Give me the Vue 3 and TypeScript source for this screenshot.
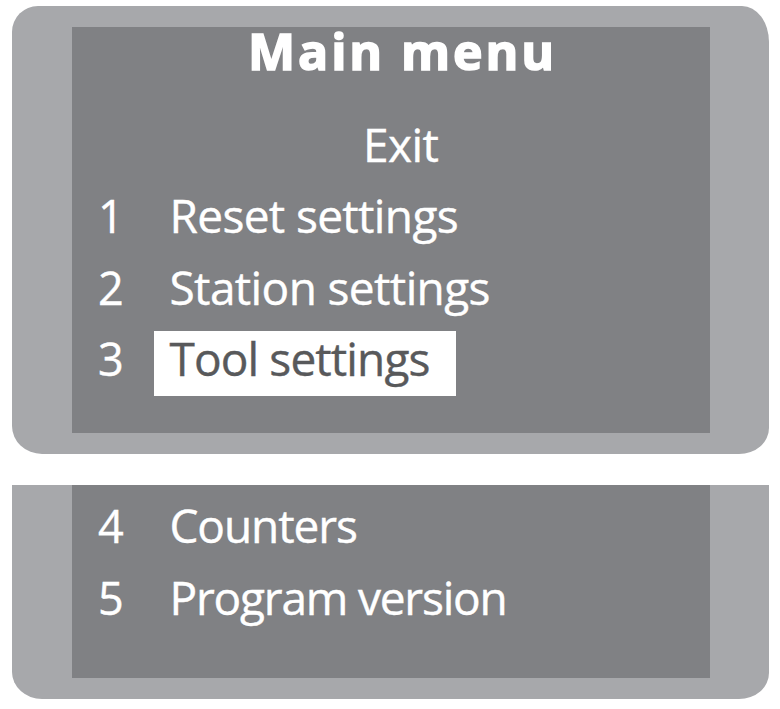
<template>
  <main class="page">
    <section class="panel panel-top">
      <div class="screen">
        <h1 class="title">Main menu</h1>
        <div class="exit">Exit</div>
        <ul class="menu">
          <li v-for="item in firstItems" :key="item.id" class="row">
            <span class="num">{{ item.id }}</span>
            <span
              class="label"
              :class="{ selected: item.id === selectedId }"
              :style="{ letterSpacing: item.tracking + 'px' }"
            >{{ item.label }}</span>
          </li>
        </ul>
      </div>
    </section>
    <section class="panel panel-bottom">
      <div class="screen">
        <ul class="menu">
          <li v-for="item in moreItems" :key="item.id" class="row">
            <span class="num">{{ item.id }}</span>
            <span class="label" :style="{ letterSpacing: item.tracking + 'px' }">{{ item.label }}</span>
          </li>
        </ul>
      </div>
    </section>
  </main>
</template>

<script setup lang="ts">
import { ref } from 'vue'

interface MenuItem {
  id: number
  label: string
  tracking: number
}

const selectedId = ref<number>(3)

const firstItems: MenuItem[] = [
  { id: 1, label: 'Reset settings', tracking: -0.65 },
  { id: 2, label: 'Station settings', tracking: -0.62 },
  { id: 3, label: 'Tool settings', tracking: -0.88 }
]

const moreItems: MenuItem[] = [
  { id: 4, label: 'Counters', tracking: -1.1 },
  { id: 5, label: 'Program version', tracking: -1.2 }
]
</script>

<style>
body {
  margin: 0;
  background: #fff;
}
</style>

<style scoped>
.page {
  box-sizing: border-box;
  height: 709px;
  padding: 6px 11px 0 12px;
  font-family: 'Open Sans', 'Noto Sans', sans-serif;
  color: #fff;
}

.panel {
  box-sizing: border-box;
  background: #a7a8ab;
  padding: 0 59px 0 60px;
}

.panel-top {
  height: 448px;
  padding-top: 21px;
  border-radius: 26px 27px 30px 30px / 26px 36px 26px 28px;
}

.panel-bottom {
  height: 214px;
  margin-top: 31px;
  border-radius: 0 0 30px 30px / 0 0 26px 27px;
}

.screen {
  box-sizing: border-box;
  display: flex;
  flex-direction: column;
  background: #808184;
}

.panel-top .screen {
  height: 406px;
}

.panel-bottom .screen {
  height: 193px;
  padding-top: 13px;
}

.title {
  margin: 0;
  padding-left: 176px;
  font-size: 50px;
  line-height: 49px;
  font-weight: 700;
  letter-spacing: 2.9px;
  white-space: nowrap;
  -webkit-text-stroke: 1.6px #fff;
}

.exit {
  margin-top: 32px;
  padding-left: 291px;
  font-size: 46px;
  line-height: 72px;
  letter-spacing: -0.6px;
  -webkit-text-stroke: 0.4px currentColor;
}

.menu {
  margin: 0;
  padding: 0;
  list-style: none;
}

.panel-top .menu {
  margin-top: 8px;
}

.row {
  display: flex;
  align-items: flex-start;
  height: 71.5px;
  padding-left: 26px;
  white-space: nowrap;
  -webkit-text-stroke: 0.4px currentColor;
}

.num {
  width: 56px;
  font-size: 45px;
  line-height: 55px;
}

.label {
  box-sizing: border-box;
  height: 65px;
  padding: 0 26px 11px 15.5px;
  font-size: 46px;
  line-height: 54px;
}

.selected {
  width: 302px;
  background: #fff;
  color: #58595b;
}
</style>
